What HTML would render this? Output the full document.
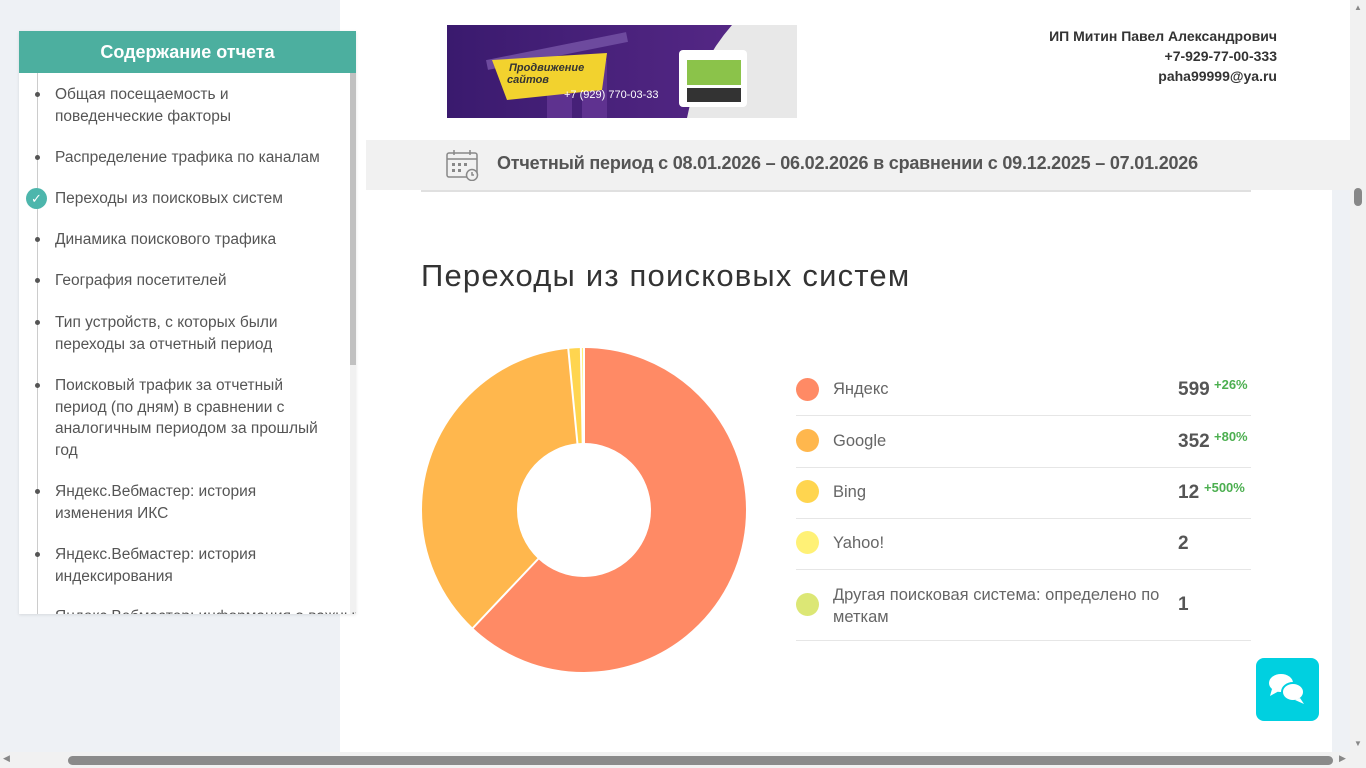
<!DOCTYPE html>
<html><head><meta charset="utf-8">
<style>
*{margin:0;padding:0;box-sizing:border-box}
body{width:1366px;height:768px;overflow:hidden;position:relative;background:#fff;font-family:"Liberation Sans","DejaVu Sans",sans-serif;color:#555}
.abs{position:absolute}
#left{left:0;top:0;width:340px;height:752px;background:#eef1f5}
#side{left:19px;top:31px;width:337px;height:583px;background:#fff;box-shadow:0 1px 3px rgba(0,0,0,.1);overflow:hidden}
#sidehead{left:0;top:0;width:337px;height:42px;background:#4caf9f;color:#fff;font-weight:bold;font-size:18px;text-align:center;line-height:42px}
.it{position:absolute;left:36px;font-size:15.5px;line-height:21.5px;color:#555;width:300px;white-space:nowrap}
.dot{position:absolute;left:16px;width:5px;height:5px;border-radius:50%;background:#555}
#vline{left:18px;top:42px;width:1px;height:560px;background:#ccc}
#sscroll{left:331px;top:42px;width:6px;height:541px;background:#f1f1f1}
#sthumb{left:331px;top:42px;width:6px;height:292px;background:#c1c1c1}
.row{position:absolute;left:796px;width:455px;border-bottom:1px solid #e6e6e6}
.c{position:absolute;left:0;width:23px;height:23px;border-radius:50%}
.lbl{position:absolute;left:37px;font-size:16.5px;color:#666}
.num{position:absolute;left:382px;font-size:19px;color:#555;font-weight:bold}
.pct{position:absolute;font-size:13px;color:#4caf50;font-weight:bold}
</style></head><body>
<div class="abs" id="left"></div>
<div class="abs" style="left:1332px;top:190px;width:18px;height:562px;background:#eef1f5"></div>
<div class="abs" id="side">
 <div class="abs" id="sidehead">Содержание отчета</div>
 <div class="abs" id="vline"></div>
 <div class="abs" id="sscroll"></div><div class="abs" id="sthumb"></div>
 <div class="dot" style="top:61px"></div><div class="it" style="top:53px">Общая посещаемость и<br>поведенческие факторы</div>
 <div class="dot" style="top:124px"></div><div class="it" style="top:116px">Распределение трафика по каналам</div>
 <div class="abs" style="left:7px;top:157px;width:21px;height:21px;border-radius:50%;background:#4db6ac;color:#fff;font-size:13px;text-align:center;line-height:21px;font-weight:bold">✓</div>
 <div class="it" style="top:157px">Переходы из поисковых систем</div>
 <div class="dot" style="top:206px"></div><div class="it" style="top:198px">Динамика поискового трафика</div>
 <div class="dot" style="top:247px"></div><div class="it" style="top:239px">География посетителей</div>
 <div class="dot" style="top:289px"></div><div class="it" style="top:281px">Тип устройств, с которых были<br>переходы за отчетный период</div>
 <div class="dot" style="top:352px"></div><div class="it" style="top:344px">Поисковый трафик за отчетный<br>период (по дням) в сравнении с<br>аналогичным периодом за прошлый<br>год</div>
 <div class="dot" style="top:458px"></div><div class="it" style="top:450px">Яндекс.Вебмастер: история<br>изменения ИКС</div>
 <div class="dot" style="top:521px"></div><div class="it" style="top:513px">Яндекс.Вебмастер: история<br>индексирования</div>
 <div class="dot" style="top:583px"></div><div class="it" style="top:575px">Яндекс.Вебмастер: информация о важных</div>
</div>

<svg class="abs" style="left:447px;top:25px" width="350" height="93" viewBox="0 0 350 93">
 <defs><linearGradient id="g" x1="0" x2="1"><stop offset="0" stop-color="#3a1a6e"/><stop offset="1" stop-color="#5a2a8a"/></linearGradient></defs>
 <rect width="350" height="93" fill="url(#g)"/>
 <path d="M260 0H350V93H240Q250 40 285 0Z" fill="#e8e8e8"/>
 <rect x="100" y="45" width="25" height="48" fill="#6a3b9a" opacity=".7"/><rect x="135" y="35" width="25" height="58" fill="#6a3b9a" opacity=".7"/>
 <path d="M40 40L180 12" stroke="#6d4a9e" stroke-width="10"/>
 <path d="M45 35L160 28L155 65L60 75Z" fill="#f2d22e"/>
 <text x="62" y="46" font-size="11" font-style="italic" font-weight="bold" fill="#333">Продвижение</text>
 <text x="60" y="58" font-size="11" font-style="italic" font-weight="bold" fill="#333">сайтов</text>
 <text x="117" y="73" font-size="11" fill="#fff">+7 (929) 770-03-33</text>
 <rect x="232" y="25" width="68" height="57" rx="4" fill="#fff"/><rect x="240" y="35" width="54" height="25" fill="#8bc34a"/><rect x="240" y="63" width="54" height="14" fill="#333"/>
</svg>
<div class="abs" style="right:89px;top:26px;text-align:right;font-size:14px;font-weight:bold;color:#333;line-height:20px">ИП Митин Павел Александрович<br>+7-929-77-00-333<br>paha99999@ya.ru</div>

<div class="abs" style="left:366px;top:140px;width:984px;height:50px;background:#f1f1f1"></div>
<div class="abs" style="left:421px;top:190px;width:830px;height:2px;background:#e0e0e0"></div>
<svg class="abs" style="left:446px;top:149px" width="34" height="32" viewBox="0 0 34 32" fill="none" stroke="#888" stroke-width="1.5"><rect x="1" y="4" width="30" height="24" rx="2"/><path d="M1 10H31M8 1V6M24 1V6"/><g fill="#888" stroke="none"><rect x="6" y="14" width="3" height="3"/><rect x="12" y="14" width="3" height="3"/><rect x="18" y="14" width="3" height="3"/><rect x="6" y="20" width="3" height="3"/><rect x="12" y="20" width="3" height="3"/></g><circle cx="26" cy="26" r="5.5" fill="#f1f1f1"/><path d="M26 23V26H28"/></svg>
<div class="abs" style="left:497px;top:153px;font-size:18px;font-weight:bold;color:#555;white-space:nowrap;letter-spacing:-0.2px">Отчетный период с 08.01.2026 – 06.02.2026 в сравнении с 09.12.2025 – 07.01.2026</div>

<div class="abs" style="left:421px;top:258px;font-size:31px;color:#333;letter-spacing:1.2px;white-space:nowrap">Переходы из поисковых систем</div>

<svg class="abs" style="left:421px;top:347px" width="326" height="326" viewBox="-163 -163 326 326">
 <g transform="rotate(-90)" fill="none" stroke-width="95">
  <circle r="114.5" stroke="#ff8a65" stroke-dasharray="446.1 1000"/>
  <circle r="114.5" stroke="#ffb74d" stroke-dasharray="262.2 1000" stroke-dashoffset="-446.1"/>
  <circle r="114.5" stroke="#ffd54f" stroke-dasharray="8.94 1000" stroke-dashoffset="-708.3"/>
  <circle r="114.5" stroke="#fff176" stroke-dasharray="1.49 1000" stroke-dashoffset="-717.2"/>
  <circle r="114.5" stroke="#dce775" stroke-dasharray="0.8 1000" stroke-dashoffset="-718.7"/>
 </g>
 <g stroke="#fff" stroke-width="2">
  <line x1="0" y1="-60" x2="0" y2="-165"/>
  <line x1="-45" y1="48" x2="-113" y2="120"/>
  <line x1="-5.9" y1="-59.7" x2="-16" y2="-164"/>
  <line x1="-1.2" y1="-60" x2="-3.2" y2="-165"/>
 </g>
</svg>

<div class="row" style="top:364px;height:52px"><div class="c" style="top:14px;background:#ff8a65"></div><div class="lbl" style="top:16px">Яндекс</div><div class="num" style="top:15px">599</div><div class="pct" style="left:418px;top:13px">+26%</div></div>
<div class="row" style="top:416px;height:52px"><div class="c" style="top:13px;background:#ffb74d"></div><div class="lbl" style="top:16px">Google</div><div class="num" style="top:15px">352</div><div class="pct" style="left:418px;top:13px">+80%</div></div>
<div class="row" style="top:468px;height:51px"><div class="c" style="top:12px;background:#ffd54f"></div><div class="lbl" style="top:15px">Bing</div><div class="num" style="top:14px">12</div><div class="pct" style="left:408px;top:12px">+500%</div></div>
<div class="row" style="top:519px;height:51px"><div class="c" style="top:12px;background:#fff176"></div><div class="lbl" style="top:15px">Yahoo!</div><div class="num" style="top:14px">2</div></div>
<div class="row" style="top:570px;height:71px"><div class="c" style="top:23px;background:#dce775"></div><div class="lbl" style="top:14px;width:345px;line-height:22px">Другая поисковая система: определено по<br>меткам</div><div class="num" style="top:24px">1</div></div>

<div class="abs" style="left:1256px;top:658px;width:63px;height:63px;border-radius:8px;background:#00d0e0"></div>
<svg class="abs" style="left:1266px;top:670px" width="44" height="38" viewBox="0 0 44 38" fill="#fff"><ellipse cx="15" cy="13" rx="12" ry="9"/><path d="M6 19L4 26L13 21Z"/><ellipse cx="27" cy="22" rx="11" ry="9" stroke="#00d0e0" stroke-width="2"/><path d="M34 28L38 34L29 30Z"/></svg>

<div class="abs" style="left:1350px;top:0;width:16px;height:752px;background:#f1f1f1"></div>
<div class="abs" style="left:1354px;top:188px;width:8px;height:18px;border-radius:4px;background:#888"></div>
<div class="abs" style="left:1354px;top:3px;font-size:8px;color:#888">▲</div>
<div class="abs" style="left:1354px;top:739px;font-size:8px;color:#888">▼</div>
<div class="abs" style="left:0;top:752px;width:1366px;height:16px;background:#f1f1f1"></div>
<div class="abs" style="left:68px;top:756px;width:1265px;height:9px;border-radius:5px;background:#8a8a8a"></div>
<div class="abs" style="left:3px;top:753px;font-size:9px;color:#888">◀</div>
<div class="abs" style="left:1339px;top:753px;font-size:9px;color:#888">▶</div>
</body></html>
